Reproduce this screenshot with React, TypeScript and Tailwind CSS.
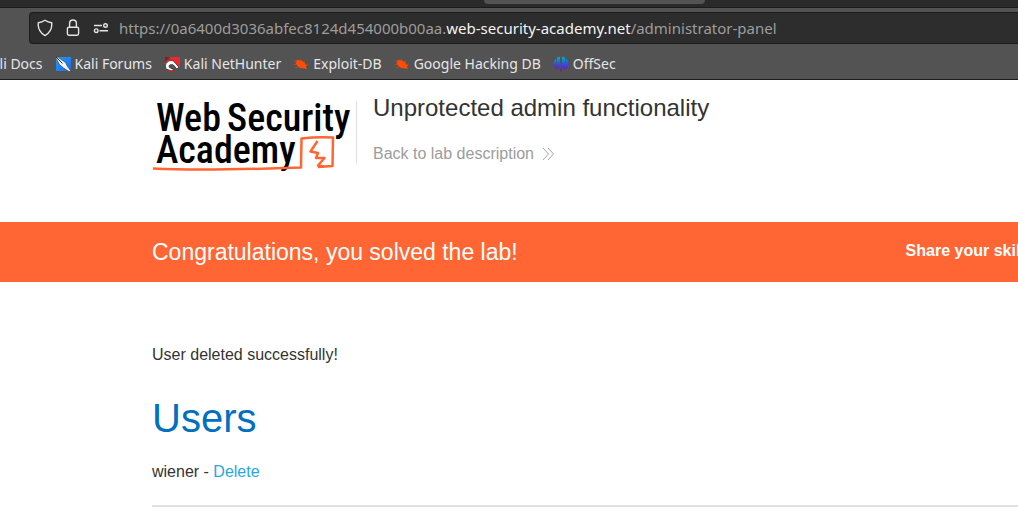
import React from "react";

function ShieldIcon() {
  return (
    <svg width="16" height="18" viewBox="0 0 16 18" fill="none" stroke="#e4e4e4" strokeWidth="1.4" strokeLinejoin="round">
      <path d="M8 1.2 Q11 3.3 14.7 3.7 Q15.6 12 8 16.6 Q.4 12 1.3 3.7 Q5 3.3 8 1.2Z" />
    </svg>
  );
}

function LockIcon() {
  return (
    <svg width="14" height="18" viewBox="0 0 14 18" fill="none" stroke="#e4e4e4" strokeWidth="1.4">
      <rect x="1.4" y="8.2" width="11.2" height="8" rx="1.6" />
      <path d="M3.6 8V4.4a3.4 3.4 0 0 1 6.8 0V8" />
    </svg>
  );
}

function SettingsIcon() {
  return (
    <svg width="16" height="12" viewBox="0 0 16 12" fill="none" stroke="#e4e4e4" strokeWidth="1.4">
      <path d="M1 3.5h8M6.5 8.7H15" />
      <circle cx="12.5" cy="3.5" r="1.8" />
      <circle cx="3.2" cy="8.7" r="1.8" />
    </svg>
  );
}

function ForumsIcon() {
  return (
    <svg width="16" height="16" viewBox="0 0 16 16">
      <defs>
        <linearGradient id="forum" x1="0" x2="1" y1="0" y2="1">
          <stop offset="0" stopColor="#1ba0f5" />
          <stop offset="1" stopColor="#2266f5" />
        </linearGradient>
      </defs>
      <rect x="1" y="1" width="15" height="14" fill="url(#forum)" />
      <path d="M0 .5 3 1.3 10.5 6.5 12.5 10.5 15.8 15 14 15.5 8.5 12 4.5 8.5Z" fill="#f5f5f0" stroke="#26343f" strokeWidth=".6" />
      <path d="M1 1 7.5 7.5" stroke="#20282e" strokeWidth="1" />
    </svg>
  );
}

function NetHunterIcon() {
  return (
    <svg width="16" height="16" viewBox="0 0 16 16">
      <path d="M5 1h11v11Z" fill="#f2262d" />
      <path d="M1 1h5L1 6Z" fill="#7c2022" />
      <path d="M2 13C-.5 7.500 5 3 9.500 5L14.800 11 12.800 13 9.500 9C7 7.500 4 9 5.500 11.500L9.500 13.500 8 15Z" fill="#fff" stroke="#2b2020" strokeWidth=".7" />
      <path d="M.8 8C2 4.500 5.500 3 8.500 4M4.300 14.500 9 15" stroke="#d52a2c" strokeWidth="1.400" fill="none" />
    </svg>
  );
}

function BugIcon() {
  return (
    <svg width="16" height="16" viewBox="0 0 16 16">
      <path d="M2.500 5.500 4.500 3.800 8 4.500 11 6 12.500 8.500 14.500 9.500 12.800 10.500 14 13 10.500 12.300 7.500 12.300 4.500 10 3 8Z" fill="#ff4d05" />
      <path d="M.8 4 4 6.500M.5 8.500 4 8.500M2 12 6 10.500M7 2.800 8.500 5M11 4.500 11.500 7M12 8.500 15 8" stroke="#c7471c" strokeWidth=".8" fill="none" />
    </svg>
  );
}

function OffSecIcon() {
  return (
    <svg width="16" height="16" viewBox="0 0 16 16">
      <defs>
        <linearGradient id="offsec" gradientUnits="userSpaceOnUse" x1="0" x2="0" y1="1" y2="15">
          <stop offset="0" stopColor="#00b0c0" />
          <stop offset=".5" stopColor="#3050e0" />
          <stop offset="1" stopColor="#8000c8" />
        </linearGradient>
      </defs>
      <g fill="url(#offsec)">
        <path d="M3.300 2.200V13Q.5 11.500.5 8T3.300 2.200ZM4 1.600Q5.500.8 7 .8V10.500Q6 11 5 13.300L4 13ZM12.700 2.200V13Q15.500 11.500 15.500 8T12.700 2.200ZM12 1.600Q10.500.8 9 .8V10.500Q10 11 11 13.300L12 13Z" />
        <path d="M7.400 8h1.200v7.500H7.400Z" />
      </g>
    </svg>
  );
}

const bookmarks = [
  { name: "Kali Forums", icon: <ForumsIcon /> },
  { name: "Kali NetHunter", icon: <NetHunterIcon /> },
  { name: "Exploit-DB", icon: <BugIcon /> },
  { name: "Google Hacking DB", icon: <BugIcon /> },
  { name: "OffSec", icon: <OffSecIcon /> },
];

function BrowserChrome() {
  return (
    <div className="border-b border-[#1c1c1c] bg-[#535353] font-['Noto_Sans',sans-serif] text-[#e6e6e6]">
      <div className="flex h-2 items-start border-b border-[#1c1c1c] bg-[#2a2a2a] pl-[484px]">
        <div className="h-1 w-[221px] rounded-b bg-[#535353]" />
      </div>
      <div className="overflow-hidden pt-1 pl-[29px]">
        <div className="flex h-8 items-center rounded-l border border-r-0 border-[#1c1c1c] bg-[#2d2d2d] pl-[7px]">
          <button aria-label="Tracking protection"><ShieldIcon /></button>
          <button aria-label="Connection security" className="ml-[13px]"><LockIcon /></button>
          <button aria-label="Site permissions" className="ml-[13px]"><SettingsIcon /></button>
          <div className="ml-[10px] text-[15px] whitespace-nowrap text-[#9d9d9d]">
            https://0a6400d3036abfec8124d454000b00aa.<span className="text-[#f4f4f4]">web-security-academy.net</span>/administrator-panel
          </div>
        </div>
      </div>
      <nav className="flex h-[35px] items-center gap-3 overflow-hidden pt-1 text-[14px] whitespace-nowrap">
        <a href="#docs" className="-ml-[17px]">Kali Docs</a>
        {bookmarks.map((b) => (
          <a key={b.name} href="#bookmark" className="flex items-center gap-1">
            {b.icon}
            <span>{b.name}</span>
          </a>
        ))}
      </nav>
    </div>
  );
}

function AcademyLogo() {
  return (
    <svg width="200" height="78" viewBox="0 0 200 78" role="img" aria-label="Web Security Academy" className="shrink-0">
      <g fill="#000" fontFamily="'Roboto Condensed','Liberation Sans Narrow',Roboto,sans-serif" fontWeight="500" fontSize="38">
        <text x="4" y="35">Web</text>
        <text x="75" y="35">Security</text>
        <text x="4" y="67">Academy</text>
      </g>
      <g fill="none" stroke="#ff6633" strokeLinejoin="round">
        <path d="M1 72.500Q50 75 149 71.500L149.500 42.500Q165 40.500 181 41.500L180.500 70 166 71" strokeWidth="2.500" />
        <path d="M165.500 45 158.500 55.500 166 57 164 62 172.500 62 166 69.500 172 70.500" strokeWidth="2.500" />
      </g>
    </svg>
  );
}

export default function App() {
  return (
    <div className="overflow-hidden bg-white font-['Liberation_Sans',Arial,sans-serif] text-base text-[#333332]">
      <BrowserChrome />
      <header className="flex h-[142px] items-start pt-[16px] pl-[152px]">
        <AcademyLogo />
        <div className="mt-[5px] ml-1 h-[63px] w-px bg-[#e0e0e0]" />
        <div className="ml-4">
          <h1 className="text-2xl leading-6">Unprotected admin functionality</h1>
          <a href="#lab" className="mt-[22px] flex items-center gap-2 text-[#9c9c9c]">
            Back to lab description
            <svg width="13" height="14" viewBox="0 0 13 14" fill="none" stroke="#9c9c9c" strokeWidth=".9">
              <path d="M1 1 6.500 7 1 13M6 1 11.500 7 6 13" />
            </svg>
          </a>
        </div>
      </header>
      <section className="flex h-[60px] items-center justify-between bg-[#ff6633] pl-[152px] whitespace-nowrap text-white">
        <h2 className="text-[23px]">Congratulations, you solved the lab!</h2>
        <a href="#share" className="-mr-[21px] pb-0.5 font-bold">Share your skills!</a>
      </section>
      <main className="pt-[61px] pl-[152px]">
        <p>User deleted successfully!</p>
        <h2 className="mt-[27px] text-[40px] leading-[48px] text-[#0070bf]">Users</h2>
        <div className="mt-[18px]">
          wiener - <a href="#delete" className="text-[#29a7df]">Delete</a>
        </div>
        <hr className="mt-[21px] border-t-2 border-[#e0e0e0]" />
      </main>
    </div>
  );
}
